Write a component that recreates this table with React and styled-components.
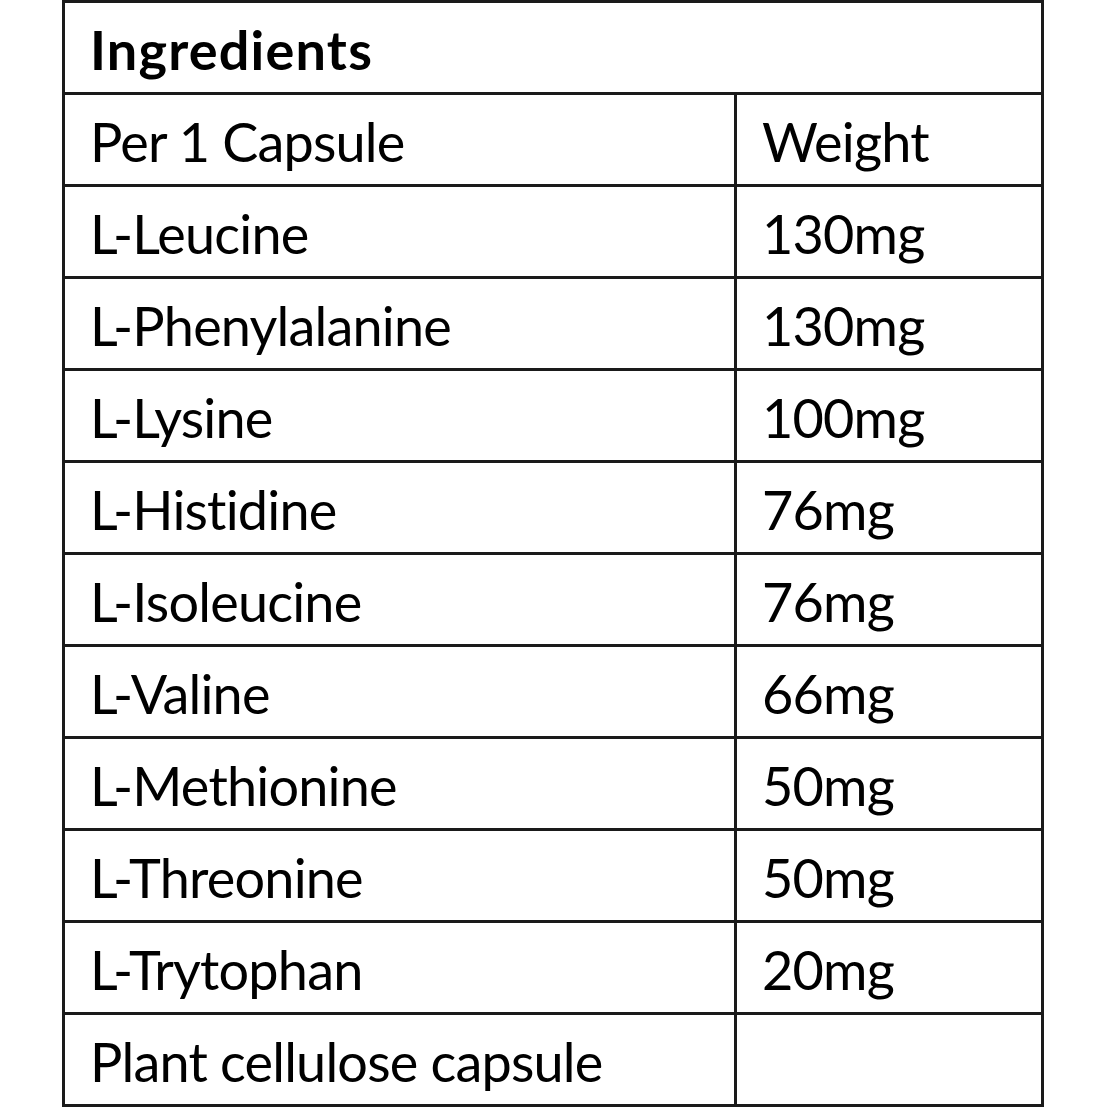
import React from "react";
import styled, { createGlobalStyle } from "styled-components";

const GlobalStyle = createGlobalStyle`
  html, body {
    margin: 0;
    padding: 0;
    background: #fff;
  }
`;

const ingredients = [
  ["L-Leucine", "130mg"],
  ["L-Phenylalanine", "130mg"],
  ["L-Lysine", "100mg"],
  ["L-Histidine", "76mg"],
  ["L-Isoleucine", "76mg"],
  ["L-Valine", "66mg"],
  ["L-Methionine", "50mg"],
  ["L-Threonine", "50mg"],
  ["L-Trytophan", "20mg"],
  ["Plant cellulose capsule", ""],
];

const App = () => {
  return (
    <Page>
      <GlobalStyle />
      <Table>
        <colgroup>
          <col style={{ width: "672px" }} />
          <col />
        </colgroup>
        <tbody>
          <tr>
            <Cell colSpan={2} $bold>
              Ingredients
            </Cell>
          </tr>
          <tr>
            <Cell>Per 1 Capsule</Cell>
            <Cell>Weight</Cell>
          </tr>
          {ingredients.map(([name, weight]) => (
            <tr key={name}>
              <Cell>{name}</Cell>
              <Cell>{weight}</Cell>
            </tr>
          ))}
        </tbody>
      </Table>
    </Page>
  );
};

export default App;

const Page = styled.div`
  padding-left: 62px;
  width: 1108px;
  box-sizing: border-box;
`;

const Table = styled.table`
  border-collapse: collapse;
  table-layout: fixed;
  width: 982px;
  border: 3px solid #1a1a1a;
`;

const Cell = styled.td`
  height: 92px;
  padding: 4px 0 0 25px;
  border: 3px solid #1a1a1a;
  font-family: "Lato", "Open Sans", sans-serif;
  font-size: 54px;
  font-weight: ${(p) => (p.$bold ? 700 : 400)};
  letter-spacing: ${(p) => (p.$bold ? "1.2px" : "-0.8px")};
  font-variant-ligatures: none;
  color: #000;
  line-height: 1;
  vertical-align: middle;
  box-sizing: border-box;
`;
